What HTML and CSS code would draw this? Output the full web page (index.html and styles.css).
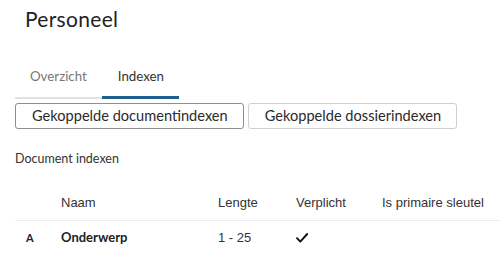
FILE: index.html
```html
<!DOCTYPE html>
<html lang="nl">
<head>
<meta charset="utf-8">
<title>Personeel</title>
<link rel="stylesheet" href="styles.css">
</head>
<body>
<div class="page">
  <h1 class="title">Personeel</h1>
  <nav class="tabs">
    <a class="tab">Overzicht</a>
    <a class="tab active">Indexen</a>
  </nav>
  <div class="buttons">
    <button class="btn btn-active">Gekoppelde documentindexen</button>
    <button class="btn">Gekoppelde dossierindexen</button>
  </div>
  <h2 class="section">Document indexen</h2>
  <table class="grid">
    <thead>
      <tr>
        <th class="c-type"></th>
        <th class="c-name">Naam</th>
        <th class="c-len">Lengte</th>
        <th class="c-req">Verplicht</th>
        <th class="c-key">Is primaire sleutel</th>
      </tr>
    </thead>
    <tbody>
      <tr>
        <td class="c-type"><span class="type">A</span></td>
        <td class="c-name"><strong>Onderwerp</strong></td>
        <td class="c-len">1 - 25</td>
        <td class="c-req"><svg class="check" viewBox="0 0 12 10" width="12" height="10"><path d="M1 5.2 L4.3 8.6 L11.2 1" fill="none" stroke="#111" stroke-width="1.9" stroke-linecap="round" stroke-linejoin="round"/></svg></td>
        <td class="c-key"></td>
      </tr>
    </tbody>
  </table>
</div>
</body>
</html>
```

FILE: styles.css
```css
* { box-sizing: border-box; }
html, body { margin: 0; padding: 0; background: #fff; }
body { font-family: Lato, "Open Sans", Arial, sans-serif; color: #333; }
.page { padding: 0 0 0 15px; }

.title {
  margin: 7px 0 0 10px;
  font-size: 21px;
  line-height: 24px;
  font-weight: 400;
  color: #222;
  letter-spacing: 0.3px;
}

.tabs {
  display: flex;
  margin-top: 27px;
}
.tab {
  padding: 10px 15px 12px 15px;
  font-size: 13.3px;
  line-height: 17px;
  color: #777;
  border-bottom: 2px solid #e2e2e2;
}
.tab.active {
  color: #333;
  border-bottom: 3px solid #1f5f8b;
  padding-bottom: 11px;
  padding-left: 16px;
}

.buttons {
  display: flex;
  gap: 4px;
  margin-top: 4px;
}
.btn {
  font-family: Lato, "Open Sans", Arial, sans-serif;
  font-size: 14.6px;
  line-height: 18px;
  color: #2a2a2a;
  background: #fff;
  border: 1px solid #cfcfcf;
  border-radius: 3px;
  padding: 3px 15px 3px 16px;
  height: 26px;
}
.btn-active { border-color: #8e8e8e; }

.section {
  margin: 22px 0 0 0;
  font-size: 12.5px;
  line-height: 16px;
  font-weight: 400;
  color: #333;
}

.grid {
  border-collapse: collapse;
  margin-top: 28px;
  width: 485px;
  font-family: "Liberation Sans", Arial, sans-serif;
  font-size: 13px;
  color: #333;
}
.grid th {
  text-align: left;
  font-weight: 400;
  line-height: 15px;
  padding: 0 0 10px 0;
  border-bottom: 1px solid #ececec;
}
.grid td {
  line-height: 16px;
  padding: 8px 0 8px 0;
  vertical-align: baseline;
}
.c-type { width: 46px; padding-left: 11px !important; }
.c-name { width: 157px; }
.c-len { width: 78px; }
.c-req { width: 86px; }
.type { font-family: Lato, Arial, sans-serif; font-weight: 700; font-size: 11px; color: #222; }
.grid strong { font-family: Lato, Arial, sans-serif; font-weight: 700; font-size: 13px; color: #222; }
.check { display: inline-block; vertical-align: -1px; }
```
